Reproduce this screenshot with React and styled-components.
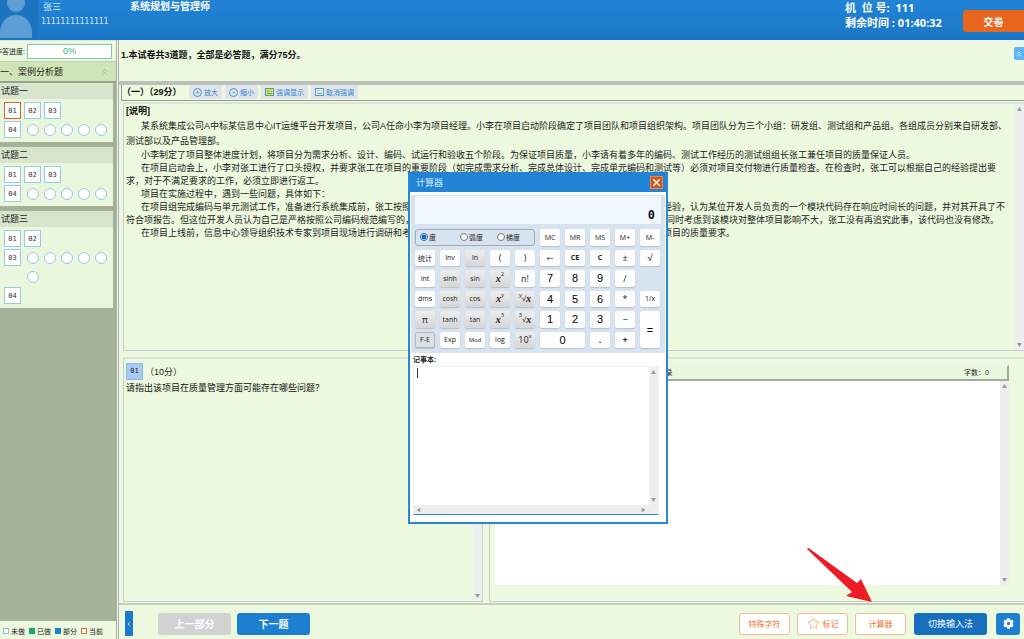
import React, { useState } from 'react'
import styled, { createGlobalStyle, css } from 'styled-components'
import { ChevronsUp, ChevronLeft, Star, X } from 'lucide-react'
import { FaCog } from 'react-icons/fa'

const paragraphs = [
  '小李制定了项目整体进度计划，将项目分为需求分析、设计、编码、试运行和验收五个阶段。为保证项目质量，小李请有着多年的编码、测试工作经历的测试组组长张工兼任项目的质量保证人员。',
  '在项目启动会上，小李对张工进行了口头授权，并要求张工在项目的重要阶段（如完成需求分析、完成总体设计、完成单元编码和测试等）必须对项目交付物进行质量检查。在检查时，张工可以根据自己的经验提出要求，对于不满足要求的工作，必须立即进行返工。',
  '项目在实施过程中，遇到一些问题，具体如下：',
  '在项目组完成编码与单元测试工作，准备进行系统集成前，张工按照项目质量要求对编码进行了检查时，根据自己多年的工作与开发经验，认为某位开发人员负责的一个模块代码存在响应时间长的问题，并对其开具了不符合项报告。但这位开发人员认为自己是严格按照公司编码规范编写的，响应时间长不是自己编码造成的问题，双方经过多次沟通未果，同时考虑到该模块对整体项目影响不大，张工没有再追究此事，该代码也没有修改。',
  '在项目上线前，信息中心领导组织技术专家到项目现场进行调研和考察，专家组经过认真细致的检查后认为该系统的部分模块不满足项目的质量要求。'
]

const groups = [
  { title: '试题一', rows: [['01', '02', '03'], ['04', 5]], current: '01' },
  { title: '试题二', rows: [['01', '02', '03'], ['04', 5]] },
  { title: '试题三', rows: [['01', '02'], ['03', 5], ['', 1], ['04']] }
]

const legend = [
  { label: '未做', color: '#fff', line: '#8fbfe0' },
  { label: '已做', color: '#1fa56a', line: '#1fa56a' },
  { label: '部分', color: '#1d7fd0', line: '#1d7fd0' },
  { label: '当前', color: '#fff', line: '#e0683a' }
]

const keys = [
  { t: 'MC' }, { t: 'MR' }, { t: 'MS' }, { t: 'M+' }, { t: 'M-' },
  { t: '统计' }, { t: 'Inv' }, { t: 'ln', grey: true }, { t: '(', mid: true }, { t: ')', mid: true },
  { t: '←' }, { t: 'CE', bold: true }, { t: 'C', bold: true }, { t: '±', mid: true }, { t: '√', mid: true },
  { t: 'Int' }, { t: 'sinh', grey: true }, { t: 'sin', grey: true }, { t: 'x', sup: '2', grey: true }, { t: 'n!', mid: true },
  { t: '7', big: true }, { t: '8', big: true }, { t: '9', big: true }, { t: '/', mid: true }, { empty: true },
  { t: 'dms' }, { t: 'cosh', grey: true }, { t: 'cos', grey: true }, { t: 'x', sup: 'y', grey: true }, { t: 'x', root: 'y', grey: true },
  { t: '4', big: true }, { t: '5', big: true }, { t: '6', big: true }, { t: '*', mid: true }, { t: '1/x' },
  { t: 'π', mid: true, grey: true }, { t: 'tanh', grey: true }, { t: 'tan', grey: true }, { t: 'x', sup: '3', grey: true }, { t: 'x', root: '3', grey: true },
  { t: '1', big: true }, { t: '2', big: true }, { t: '3', big: true }, { t: '−', mid: true }, { t: '=', big: true, tall: true },
  { t: 'F-E', pressed: true }, { t: 'Exp' }, { t: 'Mod', small: true }, { t: 'log' }, { t: '10', pow: 'x', grey: true },
  { t: '0', big: true, wide: true }, { t: '.', mid: true, bold: true }, { t: '+', mid: true, bold: true }
]

const ScrollBar = ({ horizontal }) => (
  <Track $horizontal={horizontal}>
    <svg width='5' height='4' viewBox='0 0 5 4' transform={horizontal ? 'rotate(-90)' : undefined}><path d='M0 4L2.5 0L5 4Z' fill='#9a9a9a' /></svg>
    <svg width='5' height='4' viewBox='0 0 5 4' transform={horizontal ? 'rotate(-90)' : undefined}><path d='M0 0L2.5 4L5 0Z' fill='#9a9a9a' /></svg>
  </Track>
)

const MarkIcon = ({ fill }) => (
  <svg width='9' height='8' viewBox='0 0 9 8'>
    <rect x='.5' y='.5' width='8' height='7' fill={fill} stroke='#4b94d6' />
    <path d='M2 3h2.500M2 5.500h5M6 3h1' stroke='#4b94d6' />
  </svg>
)

const Calculator = () => {
  const [unit, setUnit] = useState('度')
  const [memo, setMemo] = useState('')

  return (
    <Dialog role='dialog' aria-label='计算器'>
      <DialogTitle>
        <span>计算器</span>
        <CloseButton type='button' aria-label='关闭'><X size={11} strokeWidth={3} /></CloseButton>
      </DialogTitle>
      <CalcPanel>
        <Display>0</Display>
        <KeyGrid>
          <Units>
            {['度', '弧度', '梯度'].map((u) => (
              <label key={u}>
                <input type='radio' name='unit' checked={unit === u} onChange={() => setUnit(u)} />
                {u}
              </label>
            ))}
          </Units>
          {keys.map((k, i) => k.empty ? <span key={i} /> : (
            <Key key={i} type='button' $k={k}>
              {k.root && <sup>{k.root}</sup>}
              {k.root && '√'}
              {k.sup || k.root ? <i>{k.t}</i> : k.t}
              {(k.sup || k.pow) && <sup>{k.sup || k.pow}</sup>}
            </Key>
          ))}
        </KeyGrid>
      </CalcPanel>
      <MemoLabel htmlFor='memo'>记事本:</MemoLabel>
      <MemoBox>
        <MemoRow>
          <MemoInput id='memo' value={memo} onChange={(e) => setMemo(e.target.value)} />
          <ScrollBar />
        </MemoRow>
        <ScrollBar horizontal />
      </MemoBox>
    </Dialog>
  )
}

const App = () => {
  const [answer, setAnswer] = useState('')

  return (
    <Page>
      <GlobalStyle />
      <Header>
        <Avatar>
          <svg width='38' height='40' viewBox='0 0 38 40'>
            <circle cx='16' cy='3' r='9' fill='#5f9dd8' />
            <path d='M0 38V31C1 21 8 15 16 15S31 21 32 31V38Z' fill='#5f9dd8' />
          </svg>
        </Avatar>
        <User>
          <span>张三</span>
          <UserNo>11111111111111</UserNo>
        </User>
        <ExamTitle>系统规划与管理师</ExamTitle>
        <Seat>
          <span>机&nbsp; 位 号:&nbsp; 111</span>
          <span>剩余时间 : 01:40:32</span>
        </Seat>
        <SubmitButton type='button'>交卷</SubmitButton>
      </Header>

      <Body>
        <Sidebar>
          <Progress>
            <span>作答进度:</span>
            <div>0%</div>
          </Progress>
          <SectionTitle>
            <span>一、案例分析题</span>
            <ChevronsUp size={10} color='#a3b58d' />
          </SectionTitle>
          <Groups>
            {groups.map((g) => (
              <Group key={g.title}>
                <h3>{g.title}</h3>
                <GroupBody>
                  {g.rows.map((row, i) => (
                    <NumRow key={i}>
                      {row.map((n, j) => {
                        if (typeof n === 'number') {
                          return <Dots key={j}>{Array.from({ length: n }, (_, d) => <Dot key={d} type='button' aria-label={`小题${d + 1}`} />)}</Dots>
                        }
                        return n ? <Num key={j} type='button' $current={g.current === n}>{n}</Num> : <Blank key={j} />
                      })}
                    </NumRow>
                  ))}
                </GroupBody>
              </Group>
            ))}
          </Groups>
          <Legend>
            {legend.map((l) => (
              <LegendItem key={l.label} $color={l.color} $line={l.line}>{l.label}</LegendItem>
            ))}
          </Legend>
        </Sidebar>

        <Main>
          <Intro>
            <p>1.本试卷共3道题，全部是必答题，满分75分。</p>
            <Collapse type='button' aria-label='收起'><ChevronsUp size={8} /></Collapse>
          </Intro>
          <Toolbar>
            <strong>（一）（29分）</strong>
            <Tool type='button'><ZoomRing>+</ZoomRing>放大</Tool>
            <Tool type='button'><ZoomRing>−</ZoomRing>缩小</Tool>
            <Tool type='button'><MarkIcon fill='#e3ee1c' />强调显示</Tool>
            <Tool type='button'><MarkIcon fill='#fff' />取消强调</Tool>
          </Toolbar>

          <Panel>
            <Article>
              <h2>[说明]</h2>
              <Lead>某系统集成公司A中标某信息中心IT运维平台开发项目，公司A任命小李为项目经理。小李在项目启动阶段确定了项目团队和项目组织架构。项目团队分为三个小组：研发组、测试组和产品组。各组成员分别来自研发部、测试部以及产品管理部。</Lead>
              {paragraphs.map((p) => <p key={p}>{p}</p>)}
            </Article>
            <ScrollBar />
          </Panel>

          <Lower>
            <QuestionPanel>
              <Question>
                <div>
                  <QuestionNo>01</QuestionNo>
                  <span>（10分）</span>
                </div>
                <p>请指出该项目在质量管理方面可能存在哪些问题？</p>
              </Question>
              <ScrollBar />
            </QuestionPanel>
            <AnswerPanel>
              <AnswerHead>
                <label htmlFor='answer'>作答记录</label>
                <span>字数：{answer.length}</span>
              </AnswerHead>
              <AnswerBox>
                <textarea id='answer' value={answer} onChange={(e) => setAnswer(e.target.value)} />
                <ScrollBar />
              </AnswerBox>
            </AnswerPanel>
          </Lower>

          <Footer>
            <FoldTab type='button' aria-label='折叠'><ChevronLeft size={12} /></FoldTab>
            <NavButton type='button' $off>上一部分</NavButton>
            <NavButton type='button'>下一题</NavButton>
            <Tools>
              <LineButton type='button'>特殊字符</LineButton>
              <LineButton type='button'><Star size={13} strokeWidth={1} />标记</LineButton>
              <LineButton type='button' $gap>计算器</LineButton>
              <ImeButton type='button'>切换输入法</ImeButton>
              <GearButton type='button' aria-label='设置'><FaCog size={11} /></GearButton>
            </Tools>
          </Footer>
        </Main>
      </Body>

      <Calculator />
      <Pointer width='68' height='56' viewBox='0 0 68 56' aria-hidden='true'>
        <path d='M1 2Q2 0 4 2L51 36L55 32L66 55L40 49L46 45Z' fill='#ee1c25' />
      </Pointer>
    </Page>
  )
}

export default App


const GlobalStyle = createGlobalStyle`
  *,*::before{
    box-sizing:border-box;
  }
  body{
    margin:0;
    overflow:hidden;
    font-family:'Liberation Sans','Noto Sans CJK SC',sans-serif;
    font-size:9px;
    color:#222;
  }
  h2,h3,p{
    margin:0;
    font-size:9px;
  }
  button{
    font-family:inherit;
    padding:0;
    border:none;
    display:flex;
    align-items:center;
    justify-content:center;
    white-space:nowrap;
    cursor:pointer;
  }
  textarea{
    border:none;
    outline:none;
    resize:none;
    overflow:hidden;
  }
`

const Page = styled.div`
  position:relative;
  display:flex;
  flex-direction:column;
  height:100vh;
  background:#ecf9de;
`

const Header = styled.header`
  display:flex;
  height:40px;
  flex:none;
  color:#fff;
  background:linear-gradient(#2184d6,#1a76c5);
`

const Avatar = styled.div`
  width:38px;
  height:40px;
  background:#1c73c0;
`

const User = styled.div`
  display:flex;
  flex-direction:column;
  width:92px;
  padding-left:3px;
  line-height:14px;
  color:#d5e7f7;

  span:first-child{
    padding-left:2px;
  }
`

const UserNo = styled.span`
  font-family:'DejaVu Sans Mono',monospace;
  font-size:8px;
  line-height:15px;
`

const ExamTitle = styled.div`
  flex:1;
  font-size:10px;
  font-weight:bold;
  line-height:14px;
`

const Seat = styled.div`
  display:flex;
  flex-direction:column;
  width:118px;
  font-family:'Open Sans','Noto Sans CJK SC',sans-serif;
  font-size:11px;
  font-weight:bold;
  line-height:15px;
  white-space:nowrap;
`

const SubmitButton = styled.button`
  width:61px;
  height:22px;
  margin-top:10px;
  border-radius:3px 0 0 3px;
  background:#e8651d;
  color:#fff;
  font-size:10px;
  font-weight:bold;
`

const Body = styled.div`
  display:flex;
  flex:1;
  min-height:0;
`

const Sidebar = styled.aside`
  display:flex;
  flex-direction:column;
  flex:none;
  width:119px;
  border-right:3px double #a9aeb0;
`

const Progress = styled.div`
  display:flex;
  align-items:center;
  justify-content:space-between;
  height:22px;
  padding-right:4px;
  border-top:1px solid #d9e6e6;
  border-bottom:1px solid #c4cdbb;
  font-size:7px;
  white-space:nowrap;

  span{
    margin-left:-5px;
  }

  div{
    width:85px;
    height:15px;
    border:1px solid #7fcba4;
    background:#fff;
    color:#3fae76;
    font-size:9px;
    line-height:13px;
    text-align:center;
  }
`

const SectionTitle = styled.div`
  display:flex;
  align-items:center;
  justify-content:space-between;
  height:19px;
  padding-right:6px;
  background:#cfe5b5;
`

const Groups = styled.div`
  flex:1;
  display:flex;
  flex-direction:column;
  gap:5px;
  padding-right:3px;
  border-top:2px solid #96a38a;
  background:#a5b298;
`

const Group = styled.section`
  background:#e9f8dc;

  h3{
    height:16px;
    padding-left:1px;
    background:#d8e4cc;
    font-weight:normal;
    line-height:16px;
  }
`

const GroupBody = styled.div`
  display:flex;
  flex-direction:column;
  gap:2px;
  padding:3px 4px 4px;
`

const NumRow = styled.div`
  display:flex;
  gap:3px;
  height:17px;
`

const Num = styled.button`
  width:17px;
  height:17px;
  border:1px solid ${({ $current }) => $current ? '#e0602c' : '#9cc8e8'};
  background:#fff;
  color:#333;
  font-family:'DejaVu Sans Mono',monospace;
  font-size:7px;
`

const Blank = styled.span`
  width:17px;
`

const Dots = styled.div`
  display:flex;
  align-items:center;
  gap:5px;
  padding-left:3px;
`

const Dot = styled.button`
  width:12px;
  height:12px;
  border:1px solid #9cc4e4;
  border-radius:50%;
  background:#fff;
`

const Legend = styled.div`
  display:flex;
  align-items:center;
  gap:4px;
  height:18px;
  padding:2px 0 0 3px;
  font-size:7px;
`

const LegendItem = styled.span`
  display:flex;
  align-items:center;
  gap:2px;
  white-space:nowrap;

  &::before{
    content:'';
    width:6px;
    height:6px;
    border:1px solid ${({ $line }) => $line};
    background:${({ $color }) => $color};
  }
`

const Main = styled.main`
  display:flex;
  flex-direction:column;
  flex:1;
  min-width:0;
`

const Intro = styled.div`
  display:flex;
  justify-content:space-between;
  height:45px;
  flex:none;
  border-top:4px solid #eef3f0;
  border-bottom:4px solid #bcc0ba;

  p{
    padding-left:2px;
    font-weight:bold;
    line-height:23px;
    color:#111;
  }
`

const Collapse = styled.button`
  width:10px;
  height:13px;
  margin-top:3px;
  border-radius:2px 0 0 2px;
  background:#60b4fa;
  color:#fff;
`

const Toolbar = styled.div`
  display:flex;
  gap:3px;
  height:16px;
  flex:none;
  margin-left:2px;
  border-left:1px solid #999;
  border-bottom:1px solid #999;

  strong{
    width:64px;
    line-height:15px;
    white-space:nowrap;
    color:#111;
  }
`

const Tool = styled.button`
  gap:2px;
  height:14px;
  padding:0 4px;
  background:#e0e5ea;
  color:#2f86d2;
  font-size:7px;
`

const ZoomRing = styled.span`
  display:flex;
  align-items:center;
  justify-content:center;
  width:9px;
  height:9px;
  border:1px solid #4b94d6;
  border-radius:50%;
`

const Panel = styled.section`
  display:flex;
  flex:1 1 0;
  min-height:0;
  margin:1px 0 0 4px;
  border:1px solid #c9ccd2;
  border-top:2px solid #dde5d8;
  border-right:none;
`

const Article = styled.article`
  flex:1;
  min-width:0;
  padding:0 4px 0 2px;
  line-height:13px;
  overflow:hidden;

  h2{
    line-height:15px;
    color:#111;
  }

  p{
    text-indent:15px;
  }
`

const Lead = styled.p`
  line-height:15px;
`

const Track = styled.div`
  display:flex;
  flex-direction:${({ $horizontal }) => $horizontal ? 'row' : 'column'};
  align-items:center;
  justify-content:space-between;
  flex:none;
  background:#eeeeee;
  ${({ $horizontal }) => $horizontal
    ? css`height:9px; padding:0 12px 0 2px;`
    : css`width:9px; padding:3px 0;`}
`

const Lower = styled.div`
  display:flex;
  flex:1 1 0;
  gap:6px;
  min-height:0;
  margin:6px 0 0 4px;
`

const QuestionPanel = styled.section`
  display:flex;
  flex:none;
  width:40%;
  border:1px solid #c9ccd2;
  border-top:2px solid #dde5d8;
`

const Question = styled.div`
  flex:1;
  padding:4px 2px;

  div{
    display:flex;
    align-items:center;
    gap:2px;
  }

  p{
    line-height:16px;
    color:#111;
  }
`

const QuestionNo = styled.span`
  width:17px;
  height:17px;
  border:1px solid #8fb8e6;
  background:#a6caf2;
  font-family:'DejaVu Sans Mono',monospace;
  font-size:7px;
  line-height:15px;
  text-align:center;
`

const AnswerPanel = styled.section`
  display:flex;
  flex-direction:column;
  flex:1;
  min-width:0;
  padding:6px 15px 16px 5px;
  border:1px solid #c9ccd2;
  border-top:2px solid #dde5d8;
  border-right:none;
`

const AnswerHead = styled.div`
  display:flex;
  align-items:center;
  justify-content:space-between;
  height:16px;
  padding:0 18px 0 149px;
  border-top:1px solid #f2f5ef;
  border-right:2px solid #a5aaa0;
  border-bottom:2px solid #a5aaa0;
  background:#e7f9dc;
  font-size:7px;
`

const AnswerBox = styled.div`
  display:flex;
  flex:1;
  background:#fff;

  textarea{
    flex:1;
    min-width:0;
  }
`

const Footer = styled.footer`
  display:flex;
  align-items:center;
  gap:6px;
  height:36px;
  flex:none;
  margin-top:1px;
  padding:3px 4px 0 6px;
  border-top:2px solid #c5cdbd;
`

const FoldTab = styled.button`
  width:8px;
  height:25px;
  margin-right:19px;
  background:#1d79cd;
  color:#fff;
`

const NavButton = styled.button`
  width:73px;
  height:22px;
  border-radius:3px;
  background:${({ $off }) => $off ? '#d1d2d1' : '#1d7fd0'};
  color:#fff;
  font-size:10px;
  font-weight:bold;
`

const Tools = styled.div`
  display:flex;
  gap:7px;
  margin-left:auto;
`

const LineButton = styled.button`
  gap:3px;
  width:51px;
  height:22px;
  margin-right:${({ $gap }) => $gap ? '1px' : '0'};
  border:1px solid #f3b998;
  border-radius:3px;
  background:#fff;
  color:#ee7433;
  font-size:8px;
`

const ImeButton = styled.button`
  width:73px;
  height:22px;
  border-radius:3px;
  background:#156fbd;
  color:#fff;
  font-size:9px;
`

const GearButton = styled.button`
  width:24px;
  height:22px;
  margin-left:2px;
  border-radius:3px;
  background:#1f80d2;
  color:#fff;
`

const Dialog = styled.div`
  position:absolute;
  left:calc(50% - 104px);
  top:172px;
  display:flex;
  flex-direction:column;
  width:260px;
  padding-bottom:7px;
  border:2px solid #2a86d8;
  border-top:none;
  background:#fff;
`

const DialogTitle = styled.div`
  display:flex;
  align-items:center;
  justify-content:space-between;
  height:20px;
  padding:0 3px 0 6px;
  background:#2183d3;
  color:#d6ebfb;
`

const CloseButton = styled.button`
  width:13px;
  height:13px;
  border:1px solid #e58a50;
  background:#d2571a;
  color:#fff;
`

const CalcPanel = styled.div`
  margin:3px 1px 0;
  padding:1px 4px 5px;
  background:#d8e3f0;
`

const Display = styled.div`
  height:28px;
  margin-bottom:5px;
  padding:11px 6px 0 0;
  background:#f0f7ff;
  font-family:'DejaVu Sans Mono',monospace;
  font-size:12px;
  font-weight:bold;
  line-height:16px;
  text-align:right;
  color:#111;
`

const KeyGrid = styled.div`
  display:grid;
  grid-template-columns:repeat(10,20px);
  grid-auto-rows:1fr;
  gap:4px 5px;
  min-height:119px;
`

const Units = styled.div`
  grid-column:span 5;
  display:flex;
  align-items:center;
  gap:14px;
  padding-left:4px;
  border:1px solid #a4abb5;
  border-radius:3px;
  font-size:7px;

  label{
    display:flex;
    align-items:center;
    gap:1px;
    white-space:nowrap;
  }

  label:first-child{
    margin-right:10px;
  }

  input{
    width:8px;
    height:8px;
    margin:0;
    accent-color:#1566b8;
  }
`

const Key = styled.button`
  border-radius:2px;
  background:#fdfdfd;
  box-shadow:0 1px 1px #b9c0c9;
  color:#222;
  font-family:'Open Sans','Noto Sans CJK SC',sans-serif;
  font-size:7px;

  i{
    font-family:'Liberation Serif',serif;
    font-size:10px;
    font-weight:bold;
  }

  sup{
    align-self:flex-start;
    font-size:6px;
    line-height:9px;
  }

  ${({ $k }) => $k.grey && css`background:linear-gradient(#eee,#d6d6d6);`}
  ${({ $k }) => $k.pressed && css`background:#dcdfe3; border:1px solid #b3b7bc;`}
  ${({ $k }) => $k.bold && css`font-weight:bold;`}
  ${({ $k }) => ($k.mid || $k.pow) && css`font-size:9px;`}
  ${({ $k }) => $k.small && css`font-size:6px;`}
  ${({ $k }) => $k.big && css`font-family:'Liberation Sans',sans-serif; font-size:11px; color:#000;`}
  ${({ $k }) => $k.wide && css`grid-column:span 2;`}
  ${({ $k }) => $k.tall && css`grid-column:10; grid-row:5 / span 2;`}
`

const MemoLabel = styled.label`
  padding-left:3px;
  font-size:7px;
  font-weight:bold;
  line-height:13px;
`

const MemoBox = styled.div`
  display:flex;
  flex-direction:column;
  margin:0 7px 0 3px;
  border:1px solid #f0f0f0;
  border-bottom:1px solid #2a86d8;
`

const MemoRow = styled.div`
  display:flex;
  height:138px;

  &::before{
    content:'';
    width:1px;
    height:10px;
    margin:1px 0 0 3px;
    background:#333;
  }
`

const MemoInput = styled.textarea`
  flex:1;
  min-width:0;
  padding:1px 2px;
  font-size:9px;
`

const Pointer = styled.svg`
  position:absolute;
  right:150px;
  bottom:36px;
`
